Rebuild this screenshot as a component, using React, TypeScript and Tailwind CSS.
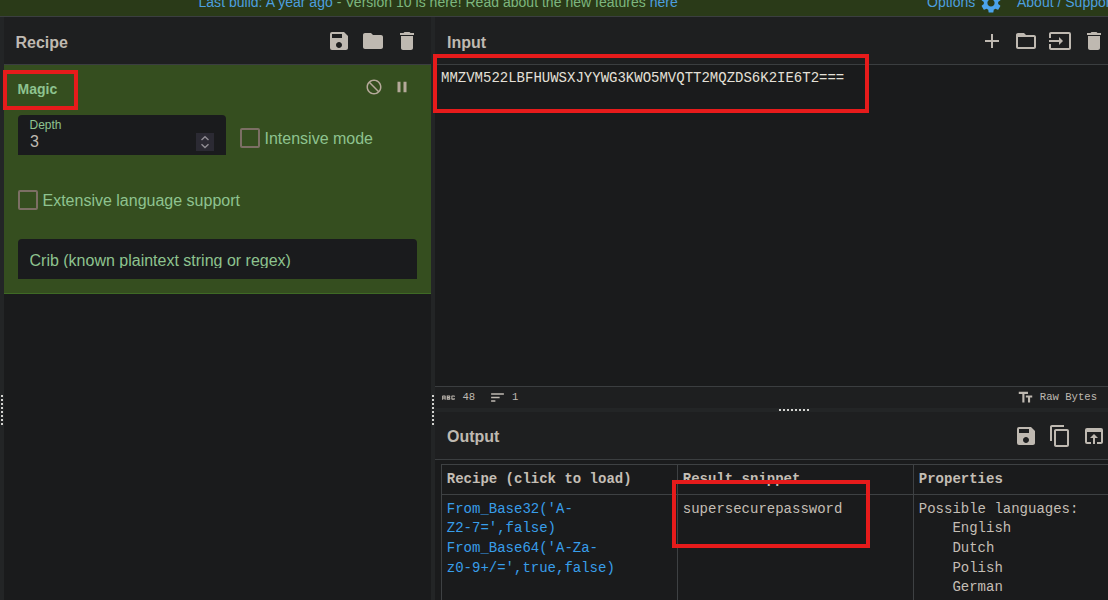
import type { ReactNode } from "react";
import {
  MdAbc,
  MdAdd,
  MdBlock,
  MdContentCopy,
  MdDelete,
  MdFolder,
  MdFolderOpen,
  MdInput,
  MdOpenInBrowser,
  MdPause,
  MdSave,
  MdSettings,
  MdSort,
  MdTextFields,
} from "react-icons/md";

function Banner() {
  return (
    <header className="relative z-10 flex h-[17px] shrink-0 border-b border-[#3b3e40] bg-[#2a3a18] text-sm leading-5 whitespace-nowrap text-[#7db77f]">
      <div className="-mt-2 ml-[198.500px] w-[728.500px] shrink-0 tracking-[0.018px]">
        <span className="text-[#4d9fdf]">Last build: A year ago</span> - Version 10 is here! Read about the new features{" "}
        <a className="text-[#4d9fdf]">here</a>
      </div>
      <div className="-mt-2 flex shrink-0 text-[#4d9fdf]">
        <span className="w-[52px]">Options</span>
        <MdSettings size={24} className="-mt-px shrink-0 text-[#4ba3ec]" />
        <span className="ml-[14px]">About / Support</span>
      </div>
    </header>
  );
}

function TitleBar({ title, children }: { title: string; children: ReactNode }) {
  return (
    <div className="flex h-12 shrink-0 items-center justify-between border-b border-[#3b3e40] bg-[#1e1f20] pl-3 text-[#bfb9b1]">
      <h2 className="pt-1 text-base leading-6 font-bold">{title}</h2>
      <div className="flex gap-2.5 pt-px">{children}</div>
    </div>
  );
}

function Dots({ vertical = false }: { vertical?: boolean }) {
  return (
    <div className={vertical ? "flex flex-col gap-0.5" : "flex gap-0.5"}>
      {Array.from({ length: 8 }, (_, i) => (
        <i key={i} className="size-0.5 bg-[#d3d3d0]" />
      ))}
    </div>
  );
}

function Gutter() {
  return (
    <div className="flex w-1 shrink-0 justify-center bg-[#232526] pt-[378px]">
      <Dots vertical />
    </div>
  );
}

function Check({ label }: { label: string }) {
  return (
    <label className="flex h-5 items-center gap-[4.500px] text-base whitespace-nowrap">
      <span className="size-5 rounded-[2px] border-2 border-[#7c6f64]" />
      <span className="pt-px">{label}</span>
    </label>
  );
}

function RecipePane() {
  return (
    <section className="flex w-[427px] shrink-0 flex-col bg-[#1a1b1c]">
      <div className="-ml-[0.500px] pl-0">
        <TitleBar title="Recipe">
          <MdSave size={24} />
          <MdFolder size={24} />
          <MdDelete size={24} className="mr-3" />
        </TitleBar>
      </div>
      <div className="h-[229px] border-b border-[#3f6a25] bg-[#354e1f] pr-3.5 pl-3.5 text-[#8ec38f]">
        <div className="flex h-[50px] items-start justify-between pt-3">
          <b className="-ml-[0.500px] pt-0.5 text-sm leading-5">Magic</b>
          <div className="mr-[6.500px] flex gap-[9.500px] pt-px text-[#b5a99a]">
            <MdBlock size={18} className="-scale-x-100" />
            <MdPause size={18} />
          </div>
        </div>
        <div className="flex gap-3.5">
          <div className="flex h-10 w-52 justify-between rounded-t bg-[#1a1b1d] pr-3 pl-3">
            <div className="-ml-px pl-[0.5px]">
              <div className="pt-[3px] text-xs leading-[15px]">Depth</div>
              <div className="pl-[0.500px] text-base leading-[18px] text-[#bfb9b1]">3</div>
            </div>
            <div className="mt-[18px] flex size-[18px] items-center justify-center bg-[#2b2a33]">
              <svg width="10" height="14" viewBox="0 0 10 14" fill="none" stroke="#908d94" strokeWidth="1.4">
                <path d="M1.5 5 5 1.7 8.500 5M1.500 9.200 5 12.500 8.500 9.200" />
              </svg>
            </div>
          </div>
          <div className="pt-[13px]">
            <Check label="Intensive mode" />
          </div>
        </div>
        <div className="mt-[35px]">
          <Check label="Extensive language support" />
        </div>
        <div className="mt-[29px] h-10 rounded-t bg-[#1a1b1d] px-[11.500px] pt-3">
          <div className="h-[17px] overflow-hidden text-base leading-[19px]">Crib (known plaintext string or regex)</div>
        </div>
      </div>
    </section>
  );
}

function InputPane() {
  return (
    <section className="flex h-[391px] shrink-0 flex-col">
      <TitleBar title="Input">
        <MdAdd size={24} />
        <MdFolderOpen size={24} />
        <MdInput size={24} />
        <MdDelete size={24} className="mr-0.5" />
      </TitleBar>
      <div className="grow pt-[3px] pl-1.5 font-['Liberation_Mono',monospace] text-sm leading-5 text-[#e4e0d8]">
        MMZVM522LBFHUWSXJYYWG3KWO5MVQTT2MQZDS6K2IE6T2===
      </div>
      <div className="flex h-[22px] shrink-0 items-center border-t border-[#3b3e40] bg-[#1e1f20] pr-[11px] pl-[5px] font-['Liberation_Mono',monospace] text-[10.600px] text-[#bfb9b1]">
        <MdAbc size={17} />
        <span className="ml-[5.500px] w-[26.500px]">48</span>
        <MdSort size={17} />
        <span className="ml-[6px] grow">1</span>
        <MdTextFields size={17} />
        <span className="ml-[5.500px]">Raw Bytes</span>
      </div>
    </section>
  );
}

function OutputPane() {
  return (
    <section className="flex grow flex-col">
      <div className="flex h-12 shrink-0 items-center justify-between border-b border-[#3b3e40] bg-[#1e1f20] pl-3 text-[#bfb9b1]">
        <h2 className="pt-0.5 text-base leading-6 font-bold">Output</h2>
        <div className="flex gap-2.5 pt-px">
          <MdSave size={24} />
          <MdContentCopy size={24} />
          <MdOpenInBrowser size={24} className="mr-0.5" />
        </div>
      </div>
      <div className="mt-1 ml-1.5 grid w-[709px] grow grid-cols-[236px_236px_236px] grid-rows-[30px_1fr] border-t border-l border-[#3e4143] font-['Liberation_Mono',monospace] text-sm leading-[19.600px] text-[#c4beb5] *:border-r *:border-[#3e4143] *:pl-[4.800px]">
        <div className="border-b pt-[5px] font-bold">Recipe (click to load)</div>
        <div className="border-b pt-[5px] font-bold">Result snippet</div>
        <div className="border-b pt-[5px] font-bold">Properties</div>
        <div className="pt-[4.800px] text-[#389eea]">
          From_Base32('A-
          <br />
          Z2-7=',false)
          <br />
          From_Base64('A-Za-
          <br />
          z0-9+/=',true,false)
        </div>
        <div className="pt-[4.800px]">supersecurepassword</div>
        <div className="pt-[4.800px]">
          Possible languages:
          <ul className="pl-[33.600px]">
            <li>English</li>
            <li>Dutch</li>
            <li>Polish</li>
            <li>German</li>
          </ul>
        </div>
      </div>
    </section>
  );
}

export default function App() {
  return (
    <div className="relative flex h-[600px] w-[1108px] flex-col overflow-hidden bg-[#1a1b1c] font-['Liberation_Sans',sans-serif]">
      <Banner />
      <main className="flex h-[583px]">
        <Gutter />
        <RecipePane />
        <Gutter />
        <div className="flex w-[673px] flex-col overflow-hidden">
          <InputPane />
          <div className="flex h-1 shrink-0 items-center bg-[#232526] pl-[344px]">
            <Dots />
          </div>
          <OutputPane />
        </div>
      </main>
      <div className="absolute top-[70px] left-[3px] z-20 h-10 w-[75px] border-4 border-[#e61b1b]" />
      <div className="absolute top-[54px] left-[433px] z-20 h-[59px] w-[436px] border-4 border-[#e61b1b]" />
      <div className="absolute top-[480px] left-[672px] z-20 h-[68px] w-[198px] border-4 border-[#e61b1b]" />
    </div>
  );
}
